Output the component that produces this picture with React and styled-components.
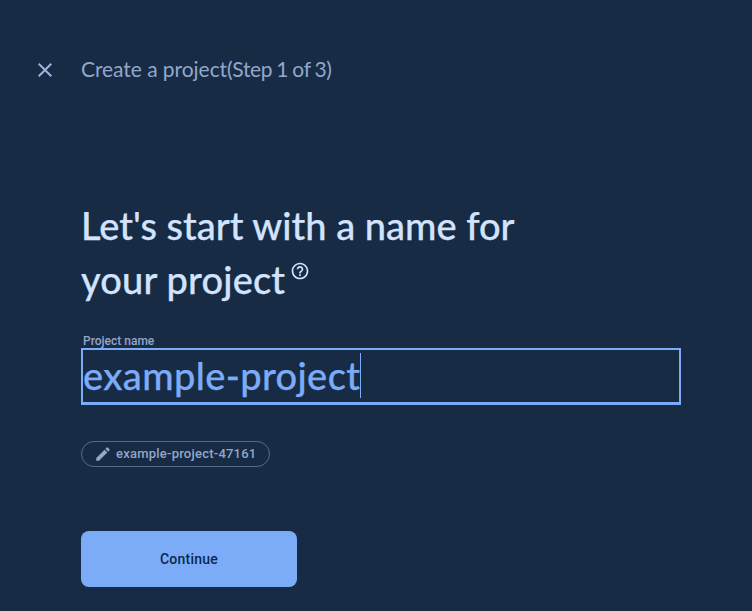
import React from "react";
import styled, { createGlobalStyle } from "styled-components";
import { MdClose, MdEdit, MdHelpOutline } from "react-icons/md";

const GlobalStyle = createGlobalStyle`
  * { box-sizing: border-box; }
  body { margin: 0; background: #172b45; overflow: hidden; }
`;

const Page = styled.main`
  height: 611px;
  background: #172b45;
  font-family: Roboto, sans-serif;
  color: #9aaed0;
`;

const Header = styled.header`
  display: flex;
  align-items: center;
  gap: 24px;
  height: 82px;
  padding: 58px 0 0 33px;
`;

const CloseButton = styled.button`
  display: flex;
  padding: 0;
  border: 0;
  background: none;
  color: #9db4d9;
`;

const Heading = styled.div`
  display: flex;
  margin-top: -2px;
  font: 400 21px/24px Lato, sans-serif;
  color: #91a7cc;
  white-space: pre;
`;

const HeadingPart = styled.span`
  letter-spacing: ${(p) => p.$tracking};
  word-spacing: ${(p) => p.$gap || "0px"};
`;

const Content = styled.section`
  display: flex;
  flex-direction: column;
  align-items: flex-start;
  padding: 116px 0 0 81px;
`;

const Title = styled.h1`
  margin: 0;
  font: 500 38px/54px Lato, sans-serif;
  color: #d3e3fd;
  white-space: nowrap;
  -webkit-text-stroke: 0.25px currentColor;
`;

const TitleLine = styled.span`
  display: flex;
  height: 54px;
  letter-spacing: ${(p) => p.$tracking};
`;

const Help = styled(MdHelpOutline)`
  margin: 9px 0 0 5px;
`;

const Label = styled.label`
  height: 15px;
  margin: 27px 0 0 2px;
  font: 500 12px/16px Roboto, sans-serif;
  color: #93a6c8;
`;

const Field = styled.div`
  display: flex;
  width: 600px;
  height: 57px;
  margin-bottom: 36px;
  border: 2px solid #7cacf8;
  border-bottom-width: 3px;
  color: #7cacf8;
  font: 500 38px/51px Lato, sans-serif;
  letter-spacing: ${(p) => p.$tracking};
`;

const Caret = styled.span`
  width: 1px;
  height: 45px;
  margin-top: 3px;
  background: #7cacf8;
`;

const FieldText = styled.span`
  width: 277px;
  white-space: nowrap;
  -webkit-text-stroke: 0.25px currentColor;
`;

const ProjectChip = styled.button`
  display: flex;
  align-items: center;
  gap: 4px;
  width: 189px;
  height: 26px;
  margin-bottom: 64px;
  padding: 0 0 0 12px;
  border: 1px solid #536a8d;
  border-radius: 13px;
  background: none;
  color: #93a6c8;
  font: 500 13px/24px Roboto, sans-serif;
  letter-spacing: 0.23px;
  white-space: nowrap;
`;

const Continue = styled.button`
  width: 216px;
  height: 56px;
  padding: 0;
  border: 0;
  border-radius: 8px;
  background: #7cacf8;
  color: #0a2850;
  font: 500 14px/20px Roboto, sans-serif;
  letter-spacing: 0.25px;
`;

export default function App() {
  return (
    <>
      <GlobalStyle />
      <Page>
        <Header>
          <CloseButton aria-label="Close"><MdClose size={24} /></CloseButton>
          <Heading>
            <HeadingPart $tracking="-0.05px">Create a project</HeadingPart>
            <HeadingPart $tracking="-0.35px" $gap="-0.9px">(Step 1 of 3)</HeadingPart>
          </Heading>
        </Header>
        <Content>
          <Title>
            <TitleLine $tracking="0px">Let's start with a name for</TitleLine>
            <TitleLine $tracking="0.16px">your project<Help size={20} /></TitleLine>
          </Title>
          <Label>Project name</Label>
          <Field $tracking="0.38px">
            <FieldText>example-project</FieldText>
            <Caret />
          </Field>
          <ProjectChip><MdEdit size={18} />example-project-47161</ProjectChip>
          <Continue>Continue</Continue>
        </Content>
      </Page>
    </>
  );
}
